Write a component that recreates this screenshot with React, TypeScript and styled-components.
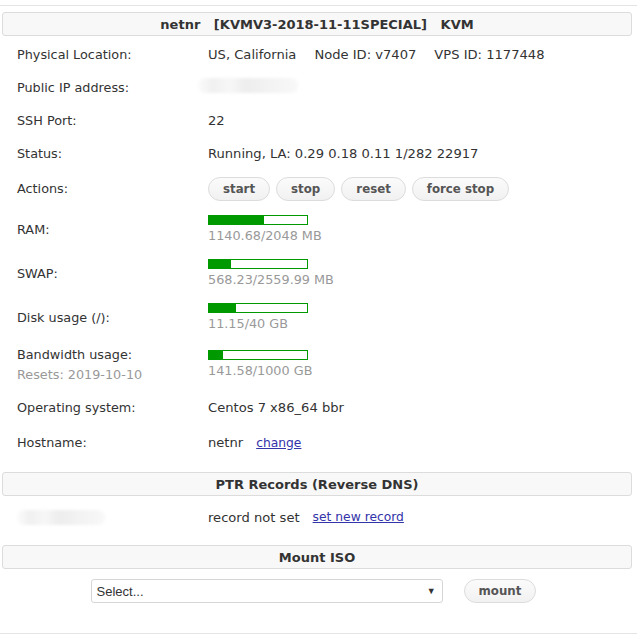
import React from "react";
import styled, { createGlobalStyle } from "styled-components";

const Global = createGlobalStyle`
  html, body { margin: 0; padding: 0; background: #fff; }
  body { font-family: "DejaVu Sans", Verdana, sans-serif; font-size: 12.8px; color: #333; }
`;

const Page = styled.div`
  margin-top: 5px;
  border-top: 1px solid #e4e4e4;
  border-bottom: 1px solid #e4e4e4;
  padding: 6px 5px 30px 2px;
  width: 630px;
  box-sizing: content-box;
`;

const SectionHead = styled.div`
  height: 22px;
  border: 1px solid #dcdcdc;
  border-radius: 3px;
  background: #f8f8f8;
  display: flex;
  align-items: center;
  justify-content: center;
  font-weight: bold;
  font-size: 13px;
  color: #333;
  white-space: pre;
`;

const Rows = styled.div`
  display: flex;
  flex-direction: column;
  padding-top: 2px;
`;

const Row = styled.div<{ $h: number }>`
  display: grid;
  grid-template-columns: 191px 1fr;
  align-items: center;
  min-height: ${(p) => p.$h}px;
  padding-left: 15px;
`;

const Label = styled.div`
  color: #333;
  line-height: 20px;
`;

const SubLabel = styled.div`
  color: #999;
`;

const Value = styled.div<{ $gap?: number }>`
  display: flex;
  align-items: center;
  gap: ${(p) => p.$gap ?? 18}px;
  white-space: pre;
  font-size: 13.1px;
`;

const Buttons = styled.div`
  display: flex;
  gap: 6px;
`;

const PillButton = styled.button`
  height: 24px;
  padding: 0 14px;
  border: 1px solid #dcdcdc;
  border-radius: 12px;
  background: linear-gradient(#fbfbfb, #f1f1f1);
  font-family: "DejaVu Sans", Verdana, sans-serif;
  font-weight: bold;
  font-size: 11.8px;
  color: #555;
  cursor: pointer;
`;

const Meter = styled.div`
  display: flex;
  flex-direction: column;
`;

const Bar = styled.div`
  width: 98px;
  height: 8px;
  border: 1px solid #009900;
  background: #fff;
  margin-bottom: 2px;
`;

const Fill = styled.div`
  height: 100%;
  background: #009900;
`;

const MeterText = styled.div`
  color: #999;
  line-height: 18px;
`;

const Link = styled.a`
  color: #3333aa;
  text-decoration: underline;
  font-size: 12.3px;
`;

const Redacted = styled.div<{ $w: number }>`
  width: ${(p) => p.$w}px;
  height: 15px;
  background: linear-gradient(90deg, #fbfbfb 0%, #f0f0f0 15%, #f7f7f7 32%, #ededed 48%, #f2f2f2 68%, #f8f8f8 100%);
  filter: blur(1.5px);
  border-radius: 7px;
`;

const SectionGap = styled.div<{ $h: number }>`
  height: ${(p) => p.$h}px;
`;

const MountRow = styled.div`
  display: flex;
  justify-content: center;
  align-items: center;
  gap: 21px;
  padding: 10px 7px 0 0;
`;

const SelectBox = styled.div`
  width: 339px;
  height: 22px;
  border: 1px solid #d6d6d6;
  border-radius: 3px;
  display: flex;
  align-items: center;
  justify-content: space-between;
  padding: 0 6px 0 5px;
  box-sizing: content-box;
  font-family: "Liberation Sans", Arial, sans-serif;
  font-size: 13px;
  color: #333;
`;

const Arrow = styled.span`
  font-size: 9px;
  color: #333;
`;

function MeterCell({ used, total, text }: { used: number; total: number; text: string }) {
  return (
    <Meter>
      <Bar>
        <Fill style={{ width: `${(used / total) * 100}%` }} />
      </Bar>
      <MeterText>{text}</MeterText>
    </Meter>
  );
}

export default function App() {
  return (
    <>
      <Global />
      <Page>
        <SectionHead>{"netnr   [KVMV3-2018-11-11SPECIAL]   KVM"}</SectionHead>
        <Rows>
          <Row $h={33}>
            <Label>Physical Location:</Label>
            <Value>
              <span>US, California</span>
              <span>Node ID: v7407</span>
              <span>VPS ID: 1177448</span>
            </Value>
          </Row>
          <Row $h={33}>
            <Label>Public IP address:</Label>
            <Value>
              <Redacted $w={100} style={{ marginLeft: -10, marginTop: -4 }} />
            </Value>
          </Row>
          <Row $h={33}>
            <Label>SSH Port:</Label>
            <Value>22</Value>
          </Row>
          <Row $h={33}>
            <Label>Status:</Label>
            <Value>Running, LA: 0.29 0.18 0.11 1/282 22917</Value>
          </Row>
          <Row $h={38}>
            <Label>Actions:</Label>
            <Buttons>
              <PillButton>start</PillButton>
              <PillButton>stop</PillButton>
              <PillButton>reset</PillButton>
              <PillButton>force stop</PillButton>
            </Buttons>
          </Row>
          <Row $h={44}>
            <Label>RAM:</Label>
            <MeterCell used={1140.68} total={2048} text="1140.68/2048 MB" />
          </Row>
          <Row $h={44}>
            <Label>SWAP:</Label>
            <MeterCell used={568.23} total={2559.99} text="568.23/2559.99 MB" />
          </Row>
          <Row $h={44}>
            <Label>Disk usage (/):</Label>
            <MeterCell used={11.15} total={40} text="11.15/40 GB" />
          </Row>
          <Row $h={50}>
            <Label>
              Bandwidth usage:
              <SubLabel>Resets: 2019-10-10</SubLabel>
            </Label>
            <MeterCell used={141.58} total={1000} text="141.58/1000 GB" />
          </Row>
          <Row $h={35}>
            <Label>Operating system:</Label>
            <Value>Centos 7 x86_64 bbr</Value>
          </Row>
          <Row $h={35}>
            <Label>Hostname:</Label>
            <Value $gap={13}>
              <span>netnr</span>
              <Link href="#">change</Link>
            </Value>
          </Row>
        </Rows>
        <SectionGap $h={12} />
        <SectionHead>PTR Records (Reverse DNS)</SectionHead>
        <Rows>
          <Row $h={38}>
            <Redacted $w={88} />
            <Value $gap={13}>
              <span>record not set</span>
              <Link href="#">set new record</Link>
            </Value>
          </Row>
        </Rows>
        <SectionGap $h={9} />
        <SectionHead>Mount ISO</SectionHead>
        <MountRow>
          <SelectBox>
            <span>Select...</span>
            <Arrow>▼</Arrow>
          </SelectBox>
          <PillButton>mount</PillButton>
        </MountRow>
      </Page>
    </>
  );
}
